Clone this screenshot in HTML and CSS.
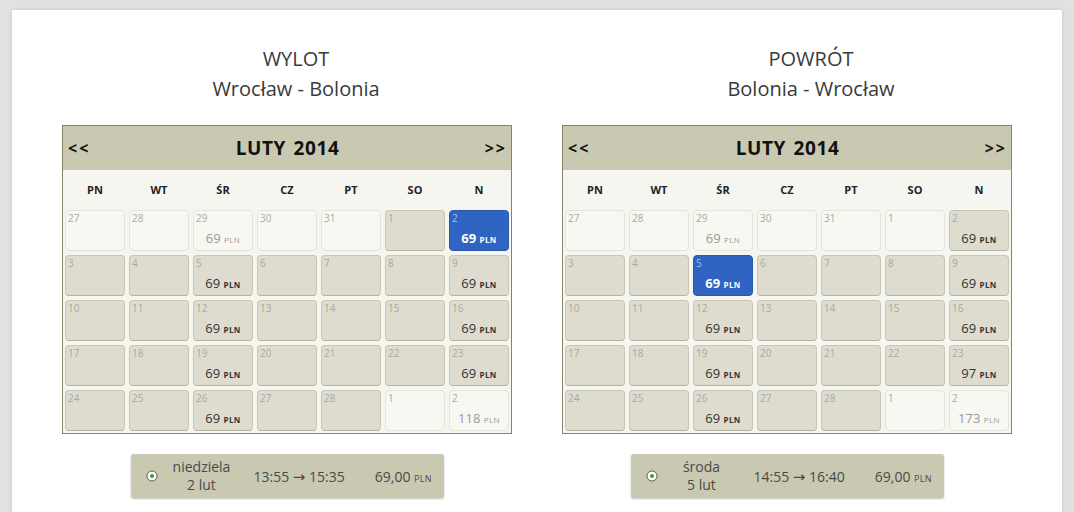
FILE: index.html
```html
<!DOCTYPE html>
<html lang="pl">
<head>
  <meta charset="UTF-8">
  <title>Wybór lotu</title>
  <link rel="stylesheet" href="styles.css">
</head>
<body>
  <div class="panel">
    <div class="columns">

      <!-- Wylot -->
      <div class="column">
        <div class="route route-out">
          <div>WYLOT</div>
          <div>Wrocław - Bolonia</div>
        </div>
        <div class="calendar">
          <div class="cal-head">
            <span class="nav">&lt;&lt;</span>
            <span class="month">LUTY 2014</span>
            <span class="nav">&gt;&gt;</span>
          </div>
          <div class="weekdays">
            <span>PN</span><span>WT</span><span>ŚR</span><span>CZ</span><span>PT</span><span>SO</span><span>N</span>
          </div>
          <div class="days">
            <div class="day out"><span class="num">27</span></div>
            <div class="day out"><span class="num">28</span></div>
            <div class="day out"><span class="num">29</span><span class="price">69 <small>PLN</small></span></div>
            <div class="day out"><span class="num">30</span></div>
            <div class="day out"><span class="num">31</span></div>
            <div class="day"><span class="num">1</span></div>
            <div class="day sel"><span class="num">2</span><span class="price">69 <small>PLN</small></span></div>

            <div class="day"><span class="num">3</span></div>
            <div class="day"><span class="num">4</span></div>
            <div class="day"><span class="num">5</span><span class="price">69 <small>PLN</small></span></div>
            <div class="day"><span class="num">6</span></div>
            <div class="day"><span class="num">7</span></div>
            <div class="day"><span class="num">8</span></div>
            <div class="day"><span class="num">9</span><span class="price">69 <small>PLN</small></span></div>

            <div class="day"><span class="num">10</span></div>
            <div class="day"><span class="num">11</span></div>
            <div class="day"><span class="num">12</span><span class="price">69 <small>PLN</small></span></div>
            <div class="day"><span class="num">13</span></div>
            <div class="day"><span class="num">14</span></div>
            <div class="day"><span class="num">15</span></div>
            <div class="day"><span class="num">16</span><span class="price">69 <small>PLN</small></span></div>

            <div class="day"><span class="num">17</span></div>
            <div class="day"><span class="num">18</span></div>
            <div class="day"><span class="num">19</span><span class="price">69 <small>PLN</small></span></div>
            <div class="day"><span class="num">20</span></div>
            <div class="day"><span class="num">21</span></div>
            <div class="day"><span class="num">22</span></div>
            <div class="day"><span class="num">23</span><span class="price">69 <small>PLN</small></span></div>

            <div class="day"><span class="num">24</span></div>
            <div class="day"><span class="num">25</span></div>
            <div class="day"><span class="num">26</span><span class="price">69 <small>PLN</small></span></div>
            <div class="day"><span class="num">27</span></div>
            <div class="day"><span class="num">28</span></div>
            <div class="day out"><span class="num">1</span></div>
            <div class="day out"><span class="num">2</span><span class="price">118 <small>PLN</small></span></div>
          </div>
        </div>
        <div class="flight">
          <svg class="radio" width="12" height="12" viewBox="0 0 12 12"><circle cx="6" cy="6" r="5" fill="#fff" stroke="#5b6050" stroke-width="1"/><circle cx="6" cy="6" r="2" fill="#3a9a3a"/></svg>
          <div class="f-date">niedziela<br>2 lut</div>
          <div class="f-time">13:55 <span class="arrow">→</span> 15:35</div>
          <div class="f-price">69,00 <small>PLN</small></div>
        </div>
      </div>

      <!-- Powrót -->
      <div class="column">
        <div class="route route-back">
          <div>POWRÓT</div>
          <div>Bolonia - Wrocław</div>
        </div>
        <div class="calendar">
          <div class="cal-head">
            <span class="nav">&lt;&lt;</span>
            <span class="month">LUTY 2014</span>
            <span class="nav">&gt;&gt;</span>
          </div>
          <div class="weekdays">
            <span>PN</span><span>WT</span><span>ŚR</span><span>CZ</span><span>PT</span><span>SO</span><span>N</span>
          </div>
          <div class="days">
            <div class="day out"><span class="num">27</span></div>
            <div class="day out"><span class="num">28</span></div>
            <div class="day out"><span class="num">29</span><span class="price">69 <small>PLN</small></span></div>
            <div class="day out"><span class="num">30</span></div>
            <div class="day out"><span class="num">31</span></div>
            <div class="day out"><span class="num">1</span></div>
            <div class="day"><span class="num">2</span><span class="price">69 <small>PLN</small></span></div>

            <div class="day"><span class="num">3</span></div>
            <div class="day"><span class="num">4</span></div>
            <div class="day sel"><span class="num">5</span><span class="price">69 <small>PLN</small></span></div>
            <div class="day"><span class="num">6</span></div>
            <div class="day"><span class="num">7</span></div>
            <div class="day"><span class="num">8</span></div>
            <div class="day"><span class="num">9</span><span class="price">69 <small>PLN</small></span></div>

            <div class="day"><span class="num">10</span></div>
            <div class="day"><span class="num">11</span></div>
            <div class="day"><span class="num">12</span><span class="price">69 <small>PLN</small></span></div>
            <div class="day"><span class="num">13</span></div>
            <div class="day"><span class="num">14</span></div>
            <div class="day"><span class="num">15</span></div>
            <div class="day"><span class="num">16</span><span class="price">69 <small>PLN</small></span></div>

            <div class="day"><span class="num">17</span></div>
            <div class="day"><span class="num">18</span></div>
            <div class="day"><span class="num">19</span><span class="price">69 <small>PLN</small></span></div>
            <div class="day"><span class="num">20</span></div>
            <div class="day"><span class="num">21</span></div>
            <div class="day"><span class="num">22</span></div>
            <div class="day"><span class="num">23</span><span class="price">97 <small>PLN</small></span></div>

            <div class="day"><span class="num">24</span></div>
            <div class="day"><span class="num">25</span></div>
            <div class="day"><span class="num">26</span><span class="price">69 <small>PLN</small></span></div>
            <div class="day"><span class="num">27</span></div>
            <div class="day"><span class="num">28</span></div>
            <div class="day out"><span class="num">1</span></div>
            <div class="day out"><span class="num">2</span><span class="price">173 <small>PLN</small></span></div>
          </div>
        </div>
        <div class="flight">
          <svg class="radio" width="12" height="12" viewBox="0 0 12 12"><circle cx="6" cy="6" r="5" fill="#fff" stroke="#5b6050" stroke-width="1"/><circle cx="6" cy="6" r="2" fill="#3a9a3a"/></svg>
          <div class="f-date">środa<br>5 lut</div>
          <div class="f-time">14:55 <span class="arrow">→</span> 16:40</div>
          <div class="f-price">69,00 <small>PLN</small></div>
        </div>
      </div>

    </div>
  </div>
</body>
</html>
```

FILE: styles.css
```css
* {
  box-sizing: border-box;
}

body {
  margin: 0;
  background-color: #e1e1e1;
  font-family: "Open Sans", Arial, sans-serif;
  color: #333;
}

/* Biały panel na szarym tle */
.panel {
  margin: 10px 12px 0;
  background-color: #fff;
  padding: 34px 50px 40px;
  box-shadow: 0 0 4px rgba(0, 0, 0, 0.12);
  min-height: 600px;
}

.columns {
  display: flex;
  gap: 50px;
}

.column {
  width: 450px;
}

/* Tytuł kierunku */
.route {
  text-align: center;
  font-size: 20px;
  line-height: 30px;
  color: #3a3a3a;
  margin-bottom: 21px;
}

.route-out {
  padding-left: 18px;
}

.route-back {
  padding-left: 48px;
}

/* Kalendarz */
.calendar {
  border: 1px solid #85856f;
  background-color: #f6f6f0;
}

.cal-head {
  height: 44px;
  background-color: #c9c9b1;
  display: flex;
  align-items: center;
  justify-content: space-between;
  padding: 0 4px 0 5px;
  font-weight: bold;
  color: #111;
}

.nav {
  font-size: 16px;
  letter-spacing: 2px;
}

.month {
  font-size: 19px;
  letter-spacing: 0.6px;
  word-spacing: 2px;
}

.weekdays {
  height: 38px;
  display: grid;
  grid-template-columns: repeat(7, 1fr);
  align-items: center;
  text-align: center;
  font-size: 11px;
  font-weight: bold;
  color: #222;
}

.days {
  display: grid;
  grid-template-columns: repeat(7, 60px);
  grid-auto-rows: 41px;
  gap: 4px;
  padding: 2px;
}

.day {
  display: flex;
  flex-direction: column;
  justify-content: space-between;
  background-color: #dedccf;
  border: 1px solid #c8c6b4;
  border-bottom-color: #b5b3a0;
  border-radius: 4px;
  padding: 1px 2px 2px 2px;
}

.day.out {
  background-color: #f8f8f3;
  border-color: #e4e4da;
}

.day.sel {
  background-color: #2f64c2;
  border-color: #2a58ac;
  color: #fff;
}

.num {
  font-size: 10px;
  line-height: 12px;
  color: #aaa9a0;
}

.sel .num {
  color: #a8bfe8;
}

.price {
  text-align: center;
  font-size: 13px;
  line-height: 16px;
  color: #333;
}

.price small {
  font-size: 8px;
  font-weight: bold;
  letter-spacing: 0.4px;
}

.out .price {
  color: #999;
}

.out .price small {
  font-weight: normal;
}

.sel .price {
  color: #fff;
  font-weight: bold;
}

/* Wybrany lot pod kalendarzem */
.flight {
  width: 313px;
  height: 44px;
  margin: 20px auto 0;
  background-color: #c9c9b1;
  border-radius: 3px;
  box-shadow: 0 1px 2px rgba(0, 0, 0, 0.25);
  display: flex;
  align-items: center;
  padding: 0 0 0 15px;
  font-size: 14px;
  color: #4a4a4a;
}

.radio {
  flex-shrink: 0;
}

.f-date {
  width: 70px;
  margin-left: 9px;
  text-align: center;
  line-height: 18px;
}

.f-time {
  margin-left: 17px;
  white-space: nowrap;
}

.arrow {
  font-family: "DejaVu Sans", sans-serif;
  font-size: 15px;
}

.f-price {
  margin-left: 30px;
}

.f-price small {
  font-size: 9px;
  letter-spacing: 0.3px;
}
```
